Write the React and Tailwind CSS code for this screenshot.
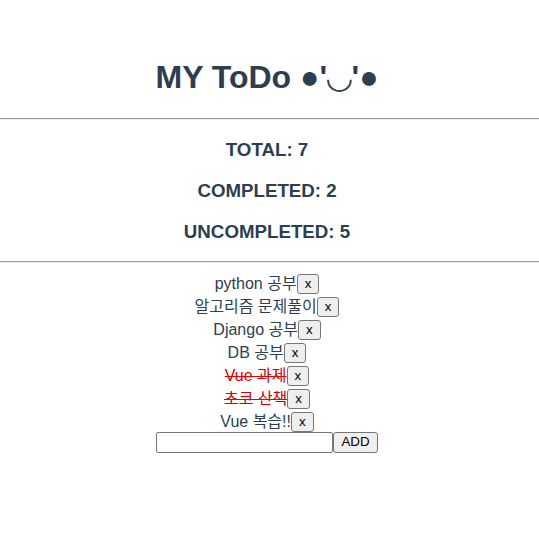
import React, { useState } from 'react';

const initialTodos = [
    { id: 1, text: 'python 공부', done: false },
    { id: 2, text: '알고리즘 문제풀이', done: false },
    { id: 3, text: 'Django 공부', done: false },
    { id: 4, text: 'DB 공부', done: false },
    { id: 5, text: 'Vue 과제', done: true },
    { id: 6, text: '초코 산책', done: true },
    { id: 7, text: 'Vue 복습!!', done: false },
];

const btn = "bg-[#efefef] border border-[#767676] rounded-[3px] text-black text-[13.33px] leading-[14px] py-[2px] px-[7px]";

export default function App() {
    const [todos, setTodos] = useState(initialTodos);
    const [draft, setDraft] = useState('');

    const completed = todos.filter((t) => t.done).length;

    const addTodo = () => {
        if (!draft.trim()) return;
        setTodos([...todos, { id: Date.now(), text: draft, done: false }]);
        setDraft('');
    };

    return (
        <div className="min-h-screen pt-[59px] bg-white text-[#2c3e50] font-['Liberation_Sans','Noto_Sans_CJK_KR','DejaVu_Sans',sans-serif] text-center">
            <h1 className="mb-[22px] pr-[5px] text-[32px] leading-[37px] font-bold">
                MY ToDo ●'◡'●
            </h1>
            <hr className="border-t border-b-0 border-[#9a9a9a] shadow-[0_1px_0_#eeeeee]" />

            {/* Stats */}
            <div className="flex flex-col gap-[19.5px] pt-[20px] pb-[18px] pr-[5px]">
                <h3 className="text-[18.72px] leading-[21.5px] font-bold">TOTAL: {todos.length}</h3>
                <h3 className="text-[18.72px] leading-[21.5px] font-bold">COMPLETED: {completed}</h3>
                <h3 className="text-[18.72px] leading-[21.5px] font-bold">UNCOMPLETED: {todos.length - completed}</h3>
            </div>
            <hr className="border-t border-b-0 border-[#9a9a9a] shadow-[0_1px_0_#eeeeee]" />

            {/* List */}
            <div className="pt-[11px] pr-[5px]">
                {todos.map((todo) => (
                    <div key={todo.id} className="flex h-[23px] items-center justify-center text-base">
                        <span
                            onClick={() => setTodos(todos.map((t) => (t.id === todo.id ? { ...t, done: !t.done } : t)))}
                            className={todo.done ? "text-[#d40000] line-through decoration-[#ee0000]" : ""}
                        >
                            {todo.text}
                        </span>
                        <button
                            onClick={() => setTodos(todos.filter((t) => t.id !== todo.id))}
                            className={btn}
                        >
                            x
                        </button>
                    </div>
                ))}
                <div className="-mt-[2px] flex h-[21px] items-stretch justify-center">
                    <input
                        value={draft}
                        onChange={(e) => setDraft(e.target.value)}
                        className="w-[177px] border border-[#767676] rounded-[2px] px-[2px] text-[13.33px] text-black outline-none"
                    />
                    <button onClick={addTodo} className="bg-[#efefef] border border-[#767676] rounded-[3px] text-black text-[13.33px] leading-[14px] px-[7px] w-[45px]">
                        ADD
                    </button>
                </div>
            </div>
        </div>
    );
}
